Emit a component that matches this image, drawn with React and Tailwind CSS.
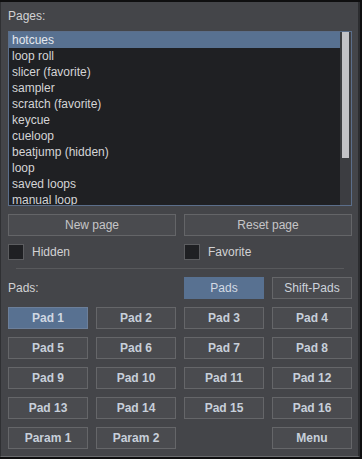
import React from "react";

const pages = [
  "hotcues",
  "loop roll",
  "slicer (favorite)",
  "sampler",
  "scratch (favorite)",
  "keycue",
  "cueloop",
  "beatjump (hidden)",
  "loop",
  "saved loops",
  "manual loop",
];

const pads = [
  "Pad 1", "Pad 2", "Pad 3", "Pad 4",
  "Pad 5", "Pad 6", "Pad 7", "Pad 8",
  "Pad 9", "Pad 10", "Pad 11", "Pad 12",
  "Pad 13", "Pad 14", "Pad 15", "Pad 16",
];

function PadBtn({ label, active }) {
  return (
    <div
      className={
        "h-[22px] border flex items-center justify-center font-bold text-[12px] leading-none " +
        (active
          ? "bg-[#587191] border-[#6c7f9a] text-[#cfd7e2]"
          : "bg-[#4a4b4f] border-[#656669] text-[#c7cfda]")
      }
    >
      {label}
    </div>
  );
}

export default function App() {
  return (
    <div
      className="w-[362px] h-[459px] bg-[#0f0f10] pt-[2px]"
      style={{ fontFamily: '"Liberation Sans", Arial, sans-serif' }}
    >
      <div className="w-[360px] h-[455px] bg-[#444549] border-l border-l-[#2f3033] border-r-2 border-r-[#2c2d30] border-b border-b-[#6a6b6e] pl-[7px] pr-[6px] flex flex-col">
        <div className="h-[16px] mt-[6px] text-[12px] leading-[16px] text-[#d2d2d4]">Pages:</div>
        <div className="mt-[7px] h-[175px] w-[344px] border border-[#5b6e8a] bg-[#1f2023] flex overflow-hidden">
          <div className="flex-1 flex flex-col">
            {pages.map((p, i) => (
              <div
                key={p}
                className={
                  "h-[16px] shrink-0 pl-[3px] text-[12px] leading-[16px] " +
                  (i === 0 ? "bg-[#587191] text-[#e4e8ee]" : "text-[#d4d4d6]")
                }
              >
                {p}
              </div>
            ))}
          </div>
          <div className="w-[11px] bg-[#3c3d41] px-[2px]">
            <div className="h-[126px] bg-[#c3c3c7]"></div>
          </div>
        </div>
        <div className="mt-[8px] flex gap-[8px]">
          <div className="w-[168px] h-[22px] border border-[#646568] bg-[#4a4b4f] flex items-center justify-center text-[12px] leading-none text-[#c6c6c8]">
            New page
          </div>
          <div className="w-[168px] h-[22px] border border-[#646568] bg-[#4a4b4f] flex items-center justify-center text-[12px] leading-none text-[#c6c6c8]">
            Reset page
          </div>
        </div>
        <div className="mt-[8px] h-[16px] flex">
          <div className="w-[176px] h-[16px] flex items-center">
            <div className="w-[16px] h-[16px] border border-[#5c5d60] bg-[#1f2023]"></div>
            <span className="ml-[8px] text-[12px] leading-[16px] text-[#d2d2d4]">Hidden</span>
          </div>
          <div className="h-[16px] flex items-center">
            <div className="w-[16px] h-[16px] border border-[#5c5d60] bg-[#1f2023]"></div>
            <span className="ml-[8px] text-[12px] leading-[16px] text-[#d2d2d4]">Favorite</span>
          </div>
        </div>
        <div className="mt-[8px] ml-[8px] w-[328px] h-px bg-[#58595c]"></div>
        <div className="mt-[8px] h-[22px] flex items-center">
          <div className="w-[176px] text-[12px] leading-[16px] text-[#d2d2d4]">Pads:</div>
          <div className="flex gap-[8px]">
            <div className="w-[80px] h-[22px] bg-[#587191] border border-[#587191] flex items-center justify-center text-[12px] leading-none text-[#d3dae4]">
              Pads
            </div>
            <div className="w-[80px] h-[22px] bg-[#4a4b4f] border border-[#656669] flex items-center justify-center text-[12px] leading-none text-[#cdd3dc]">
              Shift-Pads
            </div>
          </div>
        </div>
        <div className="mt-[8px] grid grid-cols-4 gap-x-[8px] gap-y-[8px] w-[344px]">
          {pads.map((p, i) => (
            <PadBtn key={p} label={p} active={i === 0} />
          ))}
          <PadBtn label="Param 1" />
          <PadBtn label="Param 2" />
          <div></div>
          <PadBtn label="Menu" />
        </div>
      </div>
    </div>
  );
}
